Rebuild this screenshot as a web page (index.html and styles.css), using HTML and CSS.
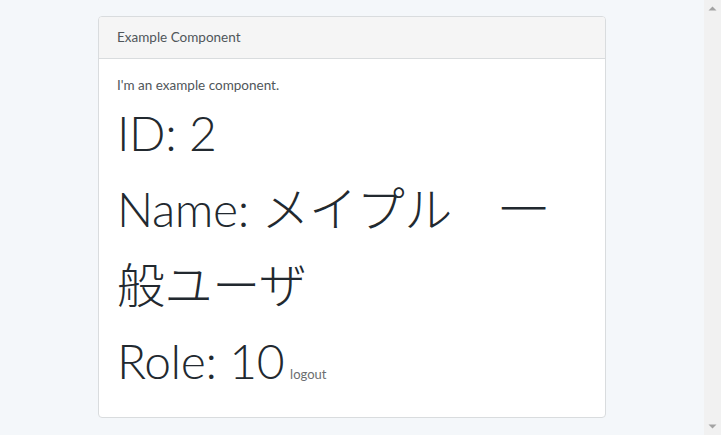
FILE: index.html
```html
<!DOCTYPE html>
<html lang="ja">
<head>
<meta charset="utf-8">
<title>Example Component</title>
<link rel="stylesheet" href="styles.css">
</head>
<body>
<div class="page">
  <main class="main">
    <div class="card">
      <div class="card-header">Example Component</div>
      <div class="card-body">
        <p class="intro">I'm an example component.</p>
        <div class="big">ID: 2</div>
        <div class="big">Name: メイプル　一般ユーザ</div>
        <div class="big">Role: 10<a class="logout" href="#">logout</a></div>
      </div>
    </div>
  </main>
  <div class="scrollbar">
    <svg class="arrow" width="17" height="17" viewBox="0 0 17 17"><path d="M4.5 10.5 L8.5 6.5 L12.5 10.5 Z" fill="#a3a3a3"/></svg>
    <svg class="arrow" width="17" height="17" viewBox="0 0 17 17"><path d="M4.5 6.5 L8.5 10.5 L12.5 6.5 Z" fill="#a3a3a3"/></svg>
  </div>
</div>
</body>
</html>
```
FILE: styles.css
```css
html, body {
  margin: 0;
  padding: 0;
  height: 100%;
}
body {
  background: #f4f7fa;
  font-family: "Lato", "Noto Sans CJK JP", sans-serif;
  color: #636b6f;
  overflow: hidden;
}
.page {
  display: flex;
  height: 435px;
}
.main {
  flex: 1;
  display: flex;
  justify-content: center;
  align-items: flex-start;
  padding-top: 16px;
}
.card {
  width: 508px;
  background: #fff;
  border: 1px solid #d9dcde;
  border-radius: 4px;
  box-sizing: border-box;
}
.card-header {
  background: #f5f5f5;
  border-bottom: 1px solid #d9dcde;
  border-radius: 3px 3px 0 0;
  padding: 10px 18px;
  font-size: 13.5px;
  line-height: 21px;
  color: #50565a;
}
.card-body {
  padding: 16px 18px 18px;
}
.intro {
  margin: 0;
  font-size: 13.5px;
  line-height: 20px;
  color: #50565a;
}
.big {
  font-family: "Lato", "Noto Sans CJK JP", sans-serif;
  font-weight: 300;
  font-size: 48px;
  line-height: 76px;
  letter-spacing: -0.4px;
  color: #22292f;
  word-break: break-all;
}
.logout {
  font-family: "Lato", sans-serif;
  font-weight: 400;
  font-size: 13px;
  line-height: 1;
  letter-spacing: 0;
  margin-left: 6px;
  color: #6b6e70;
  text-decoration: none;
}
.scrollbar {
  width: 17px;
  background: #f1f1f1;
  display: flex;
  flex-direction: column;
  justify-content: space-between;
}
.arrow {
  display: block;
}
```
